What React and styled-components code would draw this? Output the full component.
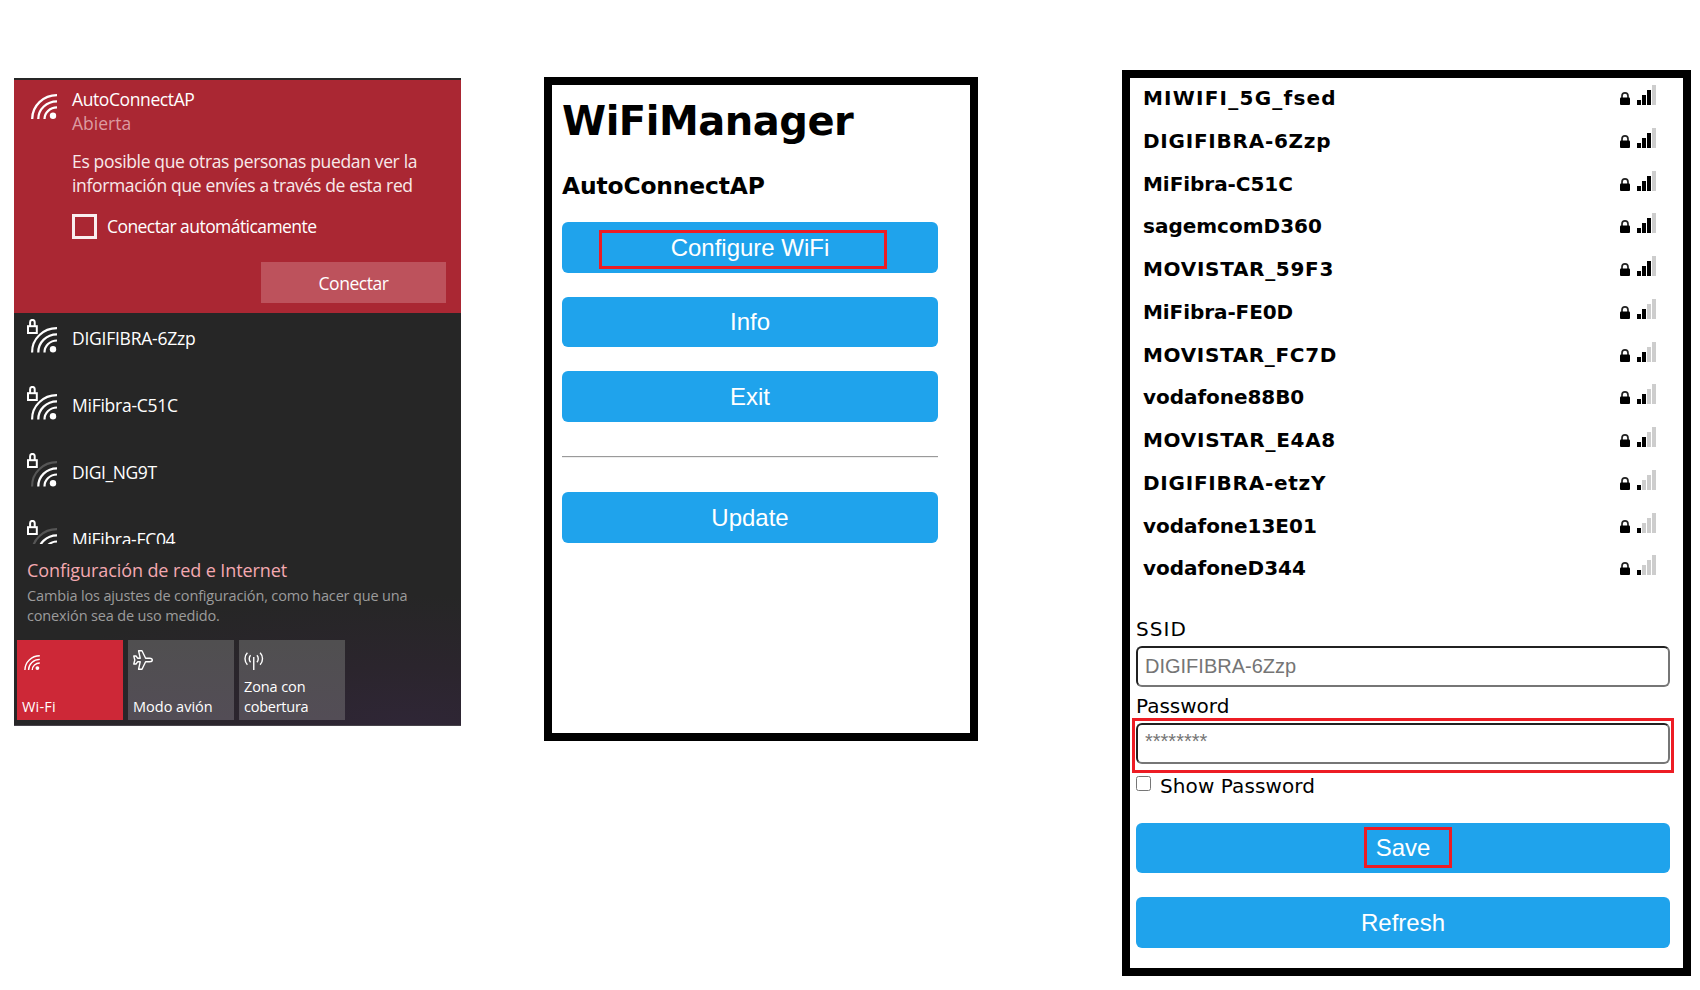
import React from 'react';
import styled, { createGlobalStyle, css } from 'styled-components';

const Global = createGlobalStyle`
  * { box-sizing: border-box; }
  body { margin: 0; background: #fff; }
  h1, h3, p { margin: 0; }
`;

const ui = css`font-family: 'Open Sans', 'Noto Sans', sans-serif;`;
const portalFont = css`font-family: 'DejaVu Sans', Verdana, sans-serif;`;

const Page = styled.main`
  display: flex;
  align-items: flex-start;
  width: 1700px;
  height: 990px;
  overflow: hidden;
`;

/* Network flyout */

const Flyout = styled.section`
  ${ui}
  width: 447px;
  height: 648px;
  margin: 78px 0 0 14px;
  border-top: 2px solid #262626;
  border-bottom: 1px solid #47434a;
  background: radial-gradient(ellipse 420px 130px at 88% 100%, #2f2636 0%, #2b252d 45%, rgba(38, 38, 38, 0) 100%), #262626;
  color: #fff;
  font-size: 17.5px;
  line-height: 24px;
  white-space: nowrap;
`;

const Tracked = styled.span`
  letter-spacing: ${(p) => p.$track || 0}px;
`;

const Selected = styled.div`
  display: flex;
  gap: 14px;
  height: 233px;
  padding: 7px 15px 10px 13px;
  background: #aa2733;
`;

const IconSlot = styled.div`
  flex: none;
  width: 31px;
  padding: ${(p) => p.$top}px 0 0 0;
  line-height: 0;
`;

const SelectedBody = styled.div`
  flex: 1;
  display: flex;
  flex-direction: column;
  align-items: flex-start;
`;

const Status = styled.div`
  color: #dc9ba1;
`;

const Warning = styled.p`
  margin-top: 14px;
  color: #f8e9ea;
`;

const AutoRow = styled.label`
  display: flex;
  gap: 10px;
  height: 25px;
  margin-top: 17px;
  line-height: 25px;
`;

const SquareCheck = styled.span`
  width: 25px;
  height: 25px;
  border: 3px solid #f9eeef;
`;

const ConnectButton = styled.button`
  ${ui}
  align-self: flex-end;
  width: 185px;
  height: 41px;
  margin-top: 23px;
  padding: 0;
  border: 0;
  background: #bd525c;
  color: #fff;
  font-size: 17.5px;
  line-height: 24px;
`;

const NetworkList = styled.div`
  height: 231px;
  overflow: hidden;
`;

const Network = styled.div`
  display: flex;
  gap: 14px;
  height: 67px;
  padding-left: 13px;
`;

const NetworkName = styled.div`
  padding-top: 13px;
`;

const SettingsLink = styled.div`
  margin: 14px 0 0 13px;
  color: #f4a9b1;
  font-size: 18px;
`;

const Caption = styled.p`
  margin: 4px 0 0 13px;
  color: #9c9c9c;
  font-size: 14.5px;
  line-height: 20px;
`;

const Tiles = styled.div`
  display: flex;
  gap: 5px;
  margin: 14px 0 0 3px;
`;

const Tile = styled.div`
  display: flex;
  flex-direction: column;
  justify-content: space-between;
  width: 106px;
  height: 80px;
  padding: ${(p) => p.$top}px 5px 3px;
  background: ${(p) => (p.$on ? '#cd2837' : 'linear-gradient(#504f50, #534d56)')};
  font-size: 14.5px;
  line-height: 20px;

  svg { margin-left: ${(p) => (p.$on ? 2 : 0)}px; }
`;

function WifiArcs({ width = 26, height = 25, dim }) {
  return (
    <svg width={width} height={height} viewBox="0 0 26 25" fill="none" stroke="#fff" strokeWidth="2.3">
      <path d="M1.2 25A24.8 23.8 0 0 1 26 1.2" stroke={dim ? '#565656' : '#fff'} />
      <path d="M7.3 25A18.7 17.7 0 0 1 26 7.3" />
      <path d="M13.5 25A12.5 11.6 0 0 1 26 13.4" />
      <circle cx="22" cy="21.8" r="3.2" fill="#fff" stroke="none" />
    </svg>
  );
}

function SecuredWifi({ dim }) {
  return (
    <svg width="31" height="34" viewBox="0 0 31 34" fill="none" stroke="#fff">
      <g strokeWidth="2.2">
        <path d="M5.1 33.5A24.8 23.8 0 0 1 30 9.2" stroke={dim ? '#565656' : '#fff'} />
        <path d="M11.3 33.5A18.7 17.9 0 0 1 30 15.3" />
        <path d="M17.5 33.5A12.5 11.8 0 0 1 30 21.5" />
      </g>
      <circle cx="26" cy="30.2" r="3.2" fill="#fff" stroke="none" />
      <rect x="-1" y="5" width="12.500" height="10.500" fill="#262626" stroke="none" />
      <rect x="1" y="7.2" width="8.8" height="6.8" strokeWidth="2" />
      <path d="M3.100 7V3.200A2.300 2.300 0 0 1 7.700 3.200V7" strokeWidth="2" />
    </svg>
  );
}

function Plane() {
  return (
    <svg width="20" height="20" viewBox="0 0 20 20" fill="none" stroke="#fff" strokeWidth="1.4" strokeLinejoin="round">
      <path d="M19.3 10C19.3 9 18.2 8.2 16.6 8.2H12.6L9 .8H5.6L7.2 8.2H4.6L3 6H.8L1.8 10L.8 14H3L4.6 11.8H7.2L5.6 19.2H9L12.6 11.8H16.6C18.2 11.8 19.3 11 19.3 10Z" />
    </svg>
  );
}

function Hotspot() {
  return (
    <svg width="20" height="18" viewBox="0 0 20 18" fill="none" stroke="#fff" strokeWidth="1.4">
      <path d="M3.4 .8C.2 4 .2 9.6 3.4 12.8M16.1 .8C19.3 4 19.3 9.6 16.1 12.8" />
      <path d="M6.6 3.3C4.8 5.2 4.8 8.4 6.6 10.3M12.9 3.3C14.7 5.2 14.7 8.4 12.9 10.3" />
      <path d="M9.75 5V18" />
    </svg>
  );
}

const nearby = [
  { name: 'DIGIFIBRA-6Zzp', track: -0.25 },
  { name: 'MiFibra-C51C', track: -0.25 },
  { name: 'DIGI_NG9T', track: -0.42, dim: true },
  { name: 'MiFibra-FC04', track: -0.3, dim: true },
];

/* Captive portal */

const Phone = styled.section`
  ${portalFont}
  width: ${(p) => p.$w}px;
  height: ${(p) => p.$h}px;
  margin: ${(p) => p.$top}px 0 0 ${(p) => p.$gap}px;
  padding: 0 ${(p) => p.$right}px 0 ${(p) => p.$left}px;
  border: 8px solid #000;
  color: #000;
  font-size: 20px;
  line-height: 24px;
  white-space: nowrap;
`;

const Title = styled.h1`
  margin-top: 12px;
  font-size: 40px;
  line-height: 48px;
  letter-spacing: -0.48px;
`;

const Subtitle = styled.h3`
  margin: 27px 0 22px;
  font-size: 23.4px;
  line-height: 28px;
  letter-spacing: -0.15px;
`;

const Buttons = styled.div`
  display: flex;
  flex-direction: column;
  gap: 24px;
  margin-top: ${(p) => p.$top || 0}px;
`;

const Button = styled.button`
  position: relative;
  width: 100%;
  height: 50.67px;
  padding: 0.6px 0 0;
  border: 0;
  border-radius: 6px;
  background: #1fa3ec;
  color: #fff;
  font: 24px/50.07px 'Liberation Sans', Arial, sans-serif;
`;

const Divider = styled.hr`
  height: 2px;
  margin: 34px 0;
  border: 0;
  border-top: 1px solid #9a9a9a;
  background: #eee;
`;

const Highlight = styled.span`
  position: absolute;
  left: ${(p) => p.$x}px;
  top: ${(p) => p.$y}px;
  width: ${(p) => p.$w}px;
  height: ${(p) => p.$h}px;
  border: 3px solid #ed1c24;
  pointer-events: none;
`;

const ScanRow = styled.div`
  display: flex;
  align-items: baseline;
  height: 42.75px;
  padding: 7px 14px 0 7px;
  font-weight: bold;

  svg { flex: none; margin-left: 7px; }
`;

const ScanName = styled.span`
  flex: 1;
  letter-spacing: ${(p) => p.$track || 0}px;
`;

function Padlock() {
  return (
    <svg width="10" height="13" viewBox="0 0 10 13">
      <path d="M2 6.5V4A3 3.1 0 0 1 8 4V6.5" fill="none" stroke="#222" strokeWidth="1.7" />
      <path d="M0 6.5Q0 5.6 1 5.6H9Q10 5.6 10 6.5V12Q10 13 9 13H1Q0 13 0 12Z" fill="#000" />
    </svg>
  );
}

function Bars({ level }) {
  return (
    <svg width="19" height="20" viewBox="0 0 19 20" shapeRendering="crispEdges">
      {[1, 2, 3, 4].map((n) => (
        <rect key={n} x={(n - 1) * 5} y={20 - n * 5} width="4" height={n * 5} fill={n <= level ? '#000' : '#cdcdcd'} />
      ))}
    </svg>
  );
}

const Label = styled.label`
  display: block;
  margin: ${(p) => p.$top}px 0 5px;
  letter-spacing: ${(p) => p.$track || 0}px;
`;

const Field = styled.div`
  position: relative;
  height: 41px;
`;

const Input = styled.input`
  display: block;
  width: 100%;
  height: 41px;
  padding: 0 7px ${(p) => p.$lift || 0}px;
  border: 2px solid;
  border-color: #212121 #767676 #767676 #212121;
  border-radius: 6px;
  background: #fff;
  font: 20px 'Liberation Sans', Arial, sans-serif;
  outline: none;

  &::placeholder { color: #757575; opacity: 1; }
`;

const ShowRow = styled.label`
  display: flex;
  gap: 9px;
  margin: 10px 0 -1px;
`;

const Check = styled.input`
  width: 15px;
  height: 15px;
  margin: 2px 0 0;
`;

const scan = [
  ['MIWIFI_5G_fsed', 3, 1.22],
  ['DIGIFIBRA-6Zzp', 3, 0.75],
  ['MiFibra-C51C', 3, -0.05],
  ['sagemcomD360', 3, 0],
  ['MOVISTAR_59F3', 3, 0.69],
  ['MiFibra-FE0D', 2, -0.08],
  ['MOVISTAR_FC7D', 2, 0.65],
  ['vodafone88B0', 2, -0.05],
  ['MOVISTAR_E4A8', 2, 0.72],
  ['DIGIFIBRA-etzY', 1, 0.75],
  ['vodafone13E01', 1, -0.03],
  ['vodafoneD344', 1, -0.03],
];

export default function App() {
  return (
    <Page>
      <Global />
      <Flyout>
        <Selected>
          <IconSlot $top={7}><svg width="30" height="25" viewBox="-4 0 30 25"><WifiArcs /></svg></IconSlot>
          <SelectedBody>
            <Tracked $track={-0.4}>AutoConnectAP</Tracked>
            <Status>Abierta</Status>
            <Warning>
              <Tracked $track={-0.34}>Es posible que otras personas puedan ver la</Tracked>
              <br />
              <Tracked $track={-0.35}>información que envíes a través de esta red</Tracked>
            </Warning>
            <AutoRow>
              <SquareCheck />
              <Tracked $track={-0.56}>Conectar automáticamente</Tracked>
            </AutoRow>
            <ConnectButton><Tracked $track={-0.45}>Conectar</Tracked></ConnectButton>
          </SelectedBody>
        </Selected>
        <NetworkList>
          {nearby.map((n) => (
            <Network key={n.name}>
              <IconSlot $top={6}><SecuredWifi dim={n.dim} /></IconSlot>
              <NetworkName><Tracked $track={n.track}>{n.name}</Tracked></NetworkName>
            </Network>
          ))}
        </NetworkList>
        <SettingsLink><Tracked $track={-0.09}>Configuración de red e Internet</Tracked></SettingsLink>
        <Caption>
          <Tracked $track={-0.15}>Cambia los ajustes de configuración, como hacer que una</Tracked>
          <br />
          <Tracked $track={-0.15}>conexión sea de uso medido.</Tracked>
        </Caption>
        <Tiles>
          <Tile $on $top={15}>
            <WifiArcs width={16} height={15} />
            <Tracked $track={0.2}>Wi-Fi</Tracked>
          </Tile>
          <Tile $top={10}>
            <Plane />
            <Tracked>Modo avión</Tracked>
          </Tile>
          <Tile $top={12}>
            <Hotspot />
            <div>
              <Tracked $track={-0.1}>Zona con</Tracked>
              <br />
              <Tracked $track={-0.25}>cobertura</Tracked>
            </div>
          </Tile>
        </Tiles>
      </Flyout>

      <Phone $w={434} $h={664} $top={77} $gap={83} $left={10} $right={32}>
        <Title>WiFiManager</Title>
        <Subtitle>AutoConnectAP</Subtitle>
        <Buttons>
          <Button>Configure WiFi<Highlight $x={37} $y={8} $w={288} $h={39} /></Button>
          <Button>Info</Button>
          <Button>Exit</Button>
        </Buttons>
        <Divider />
        <Button>Update</Button>
      </Phone>

      <Phone $w={569} $h={906} $top={70} $gap={144} $left={6} $right={13}>
        {scan.map(([name, level, track]) => (
          <ScanRow key={name}>
            <ScanName $track={track}>{name}</ScanName>
            <Padlock />
            <Bars level={level} />
          </ScanRow>
        ))}
        <Label $top={26} $track={1.1}>SSID</Label>
        <Field><Input placeholder="DIGIFIBRA-6Zzp" /></Field>
        <Label $top={7}>Password</Label>
        <Field>
          <Input type="password" placeholder="********" $lift={4} />
          <Highlight $x={-4} $y={-5} $w={542} $h={55} />
        </Field>
        <ShowRow><Check type="checkbox" /><Tracked $track={0.1}>Show Password</Tracked></ShowRow>
        <Buttons $top={25.67}>
          <Button>Save<Highlight $x={228} $y={4} $w={88} $h={41} /></Button>
          <Button>Refresh</Button>
        </Buttons>
      </Phone>
    </Page>
  );
}
